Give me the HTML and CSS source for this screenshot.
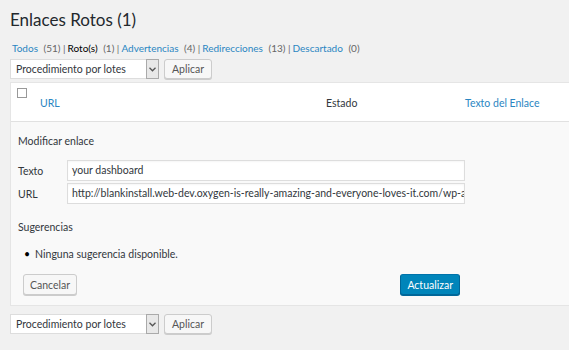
FILE: index.html
```html
<!DOCTYPE html>
<html lang="es">
<head>
<meta charset="utf-8">
<title>Enlaces Rotos</title>
<link rel="stylesheet" href="styles.css">
</head>
<body>
<div class="wrap">
  <h1 class="title">Enlaces Rotos (1)</h1>
  <ul class="subsubsub">
    <li><a href="#">Todos</a> <span class="count">(51)</span> |</li>
    <li><a href="#" class="current">Roto(s)</a> <span class="count">(1)</span> |</li>
    <li><a href="#">Advertencias</a> <span class="count">(4)</span> |</li>
    <li><a href="#">Redirecciones</a> <span class="count">(13)</span> |</li>
    <li><a href="#">Descartado</a> <span class="count">(0)</span></li>
  </ul>
  <div class="tablenav">
    <div class="select"><span class="select-text">Procedimiento por lotes</span><span class="select-arrow"><svg width="7" height="5" viewBox="0 0 7 5"><path d="M0.5 0.8 L3.5 3.8 L6.5 0.8" fill="none" stroke="#555" stroke-width="1.3"/></svg></span></div>
    <button class="button">Aplicar</button>
  </div>
  <div class="table">
    <div class="thead">
      <div class="cell cb"><span class="checkbox"></span></div>
      <div class="cell"><a href="#">URL</a></div>
      <div class="cell">Estado</div>
      <div class="cell"><a href="#">Texto del Enlace</a></div>
    </div>
    <div class="editor">
      <div class="legend">Modificar enlace</div>
      <div class="field">
        <label class="label">Texto</label>
        <div class="input">your dashboard</div>
      </div>
      <div class="field">
        <label class="label">URL</label>
        <div class="input">http://blankinstall.web-dev.oxygen-is-really-amazing-and-everyone-loves-it.com/wp-admin/</div>
      </div>
      <div class="legend sug">Sugerencias</div>
      <ul class="suggestions"><li>Ninguna sugerencia disponible.</li></ul>
      <div class="actions">
        <button class="button">Cancelar</button>
        <button class="button primary">Actualizar</button>
      </div>
    </div>
  </div>
  <div class="tablenav bottom">
    <div class="select"><span class="select-text">Procedimiento por lotes</span><span class="select-arrow"><svg width="7" height="5" viewBox="0 0 7 5"><path d="M0.5 0.8 L3.5 3.8 L6.5 0.8" fill="none" stroke="#555" stroke-width="1.3"/></svg></span></div>
    <button class="button">Aplicar</button>
  </div>
</div>
</body>
</html>
```
FILE: styles.css
```css
* { box-sizing: border-box; }
html, body { margin: 0; padding: 0; }
body {
  background: #f1f1f1;
  font-family: Lato, "Open Sans", sans-serif;
  font-size: 10.5px;
  color: #444;
  overflow: hidden;
}
a { color: #2a86c2; text-decoration: none; }
.wrap { padding: 0 0 0 10px; }
.title {
  margin: 0;
  padding: 8px 0 0 0;
  font-size: 17px;
  font-weight: 400;
  color: #23282d;
  line-height: 24px;
  height: 39px;
}
.subsubsub {
  list-style: none;
  margin: 0;
  padding: 1px 0 0 2px;
  display: flex;
  gap: 2px;
  font-size: 10px;
  line-height: 16px;
  height: 20px;
  color: #666;
}
.subsubsub li { white-space: pre; }
.subsubsub .current { color: #000; }
.count { color: #666; margin-left: 3px; }
.tablenav { display: flex; gap: 5px; height: 22px; margin-top: 0; align-items: flex-start; }
.select {
  width: 149px;
  height: 20px;
  background: #fff;
  border: 1px solid #ddd;
  display: flex;
  align-items: center;
  justify-content: space-between;
  color: #32373c;
}
.select-text { padding-left: 5px; }
.select-arrow {
  width: 13px;
  height: 20px;
  margin: -1px -1px -1px 0;
  border: 1px solid #aaa;
  background: #e8e8e8;
  display: flex;
  align-items: center;
  justify-content: center;
}
.button {
  font-family: inherit;
  font-size: 10.5px;
  color: #555;
  background: #f7f7f7;
  border: 1px solid #ccc;
  border-radius: 3px;
  box-shadow: 0 1px 0 #ccc;
  height: 20px;
  padding: 0 7px;
  line-height: 18px;
}
.table {
  margin-top: 1px;
  background: #fff;
  border: 1px solid #e5e5e5;
  border-right: 0;
}
.thead {
  display: grid;
  grid-template-columns: 29px 286px 139px 1fr;
  height: 39px;
  border-bottom: 1px solid #e1e1e1;
  color: #32373c;
}
.cell { padding-top: 12px; line-height: 16px; }
.cell.cb { padding: 5px 0 0 6px; }
.checkbox {
  display: block;
  width: 10px;
  height: 10px;
  border: 1px solid #999;
  background: #fff;
}
.editor {
  background: #f9f9f9;
  padding: 10px 0 10px 7px;
  color: #32373c;
}
.legend { line-height: 16px; height: 22px; padding-top: 1px; }
.field { display: flex; align-items: center; height: 23px; margin-top: 5px; }
.field + .field { margin-top: 0; }
.label { width: 49px; }
.input {
  width: 398px;
  height: 21px;
  background: #fff;
  border: 1px solid #ddd;
  padding: 0 4px;
  line-height: 19px;
  white-space: nowrap;
  overflow: hidden;
  color: #32373c;
  box-shadow: inset 0 1px 2px rgba(0,0,0,0.04);
}
.legend.sug { margin-top: 13px; }
.suggestions { margin: 0; padding: 0 0 0 6px; list-style: none; height: 34px; }
.suggestions li { padding-top: 6px; line-height: 16px; }
.suggestions li::before { content: "\2022"; margin-right: 5px; color: #000; }
.actions { display: flex; justify-content: space-between; width: 442px; padding-left: 5px; height: 21px; }
.actions .button { height: 21px; padding: 0 6px; }
.button.primary {
  background: #0085ba;
  border-color: #0073aa #006799 #006799;
  color: #fff;
  box-shadow: 0 1px 0 #006799;
  padding: 0 6px;
}
.tablenav.bottom { margin-top: 8px; }
```
